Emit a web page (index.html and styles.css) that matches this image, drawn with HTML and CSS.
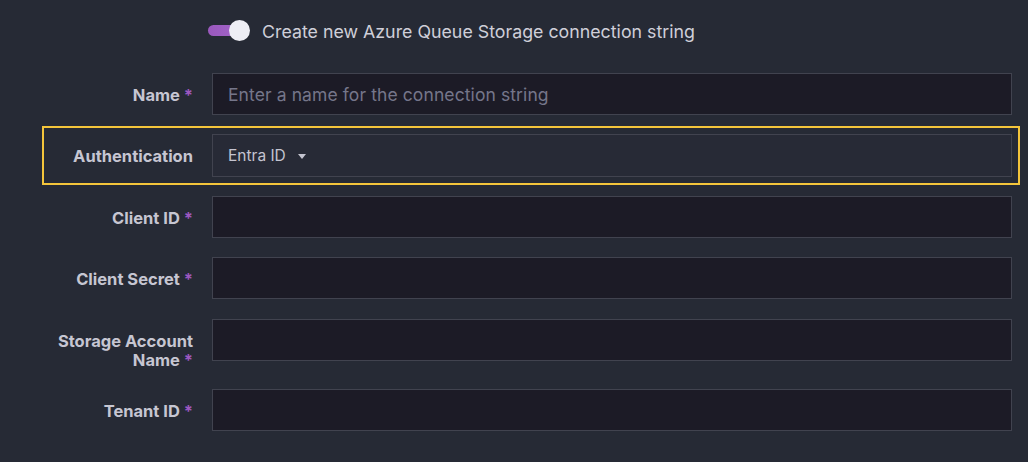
FILE: index.html
```html
<!DOCTYPE html>
<html>
<head>
<meta charset="utf-8">
<link rel="stylesheet" href="styles.css">
</head>
<body>
<div class="page">
  <div class="toggle-row">
    <span class="switch"><span class="track"></span><span class="knob"></span></span>
    <span class="toggle-label">Create new Azure Queue Storage connection string</span>
  </div>
  <form class="form">
    <div class="row">
      <label class="label">Name <span class="req">*</span></label>
      <div class="input"><span class="placeholder">Enter a name for the connection string</span></div>
    </div>
    <div class="row highlight">
      <label class="label">Authentication</label>
      <div class="select"><span>Entra ID</span><span class="caret"></span></div>
    </div>
    <div class="row">
      <label class="label">Client ID <span class="req">*</span></label>
      <div class="input"></div>
    </div>
    <div class="row">
      <label class="label">Client Secret <span class="req">*</span></label>
      <div class="input"></div>
    </div>
    <div class="row">
      <label class="label">Storage Account Name <span class="req">*</span></label>
      <div class="input"></div>
    </div>
    <div class="row">
      <label class="label">Tenant ID <span class="req">*</span></label>
      <div class="input"></div>
    </div>
  </form>
</div>
</body>
</html>
```

FILE: styles.css
```css
html, body {
  margin: 0;
  padding: 0;
  background: #262a35;
}
body {
  font-family: "Inter", "Noto Sans", sans-serif;
  color: #c9c9d4;
}
.page {
  width: 1028px;
  height: 462px;
  box-sizing: border-box;
  padding: 20px 16px 0 50px;
}
.toggle-row {
  display: flex;
  align-items: center;
  margin-left: 158px;
  height: 22px;
}
.switch {
  position: relative;
  width: 42px;
  height: 22px;
  display: inline-block;
}
.track {
  position: absolute;
  left: 0;
  top: 5px;
  width: 36px;
  height: 11px;
  border-radius: 6px;
  background: linear-gradient(90deg, #9a58bd, #a266c9);
}
.knob {
  position: absolute;
  left: 21px;
  top: 0;
  width: 21px;
  height: 21px;
  border-radius: 50%;
  background: #eeeef5;
}
.toggle-label {
  margin-left: 12px;
  font-size: 17.8px;
  color: #cfcfd9;
}
.form {
  margin-top: 31px;
  display: flex;
  flex-direction: column;
  gap: 19px;
}
.row {
  display: flex;
  align-items: flex-start;
  gap: 19px;
}
.row:nth-child(5) {
  margin-top: 1px;
}
.label {
  width: 143px;
  flex: none;
  text-align: right;
  font-weight: 700;
  font-size: 16.5px;
  line-height: 19px;
  padding-top: 13px;
  color: #c6c6d2;
}
.req {
  color: #9d58c0;
  font-weight: 700;
}
.input, .select {
  flex: 1;
  height: 42px;
  box-sizing: border-box;
  border: 1px solid #41434f;
  background: #1c1b26;
  display: flex;
  align-items: center;
  padding: 0 15px;
}
.placeholder {
  color: #75768a;
  font-size: 17.5px;
  letter-spacing: 0.1px;
}
.highlight {
  outline: 2px solid #f4c53b;
  outline-offset: 6px;
}
.select {
  background: #272a36;
  height: 43px;
  color: #c4c4d0;
  font-size: 15.5px;
}
.caret {
  width: 0;
  height: 0;
  border-left: 4.5px solid transparent;
  border-right: 4.5px solid transparent;
  border-top: 5px solid #c4c4d0;
  margin-left: 12px;
  margin-top: 2px;
}
```
